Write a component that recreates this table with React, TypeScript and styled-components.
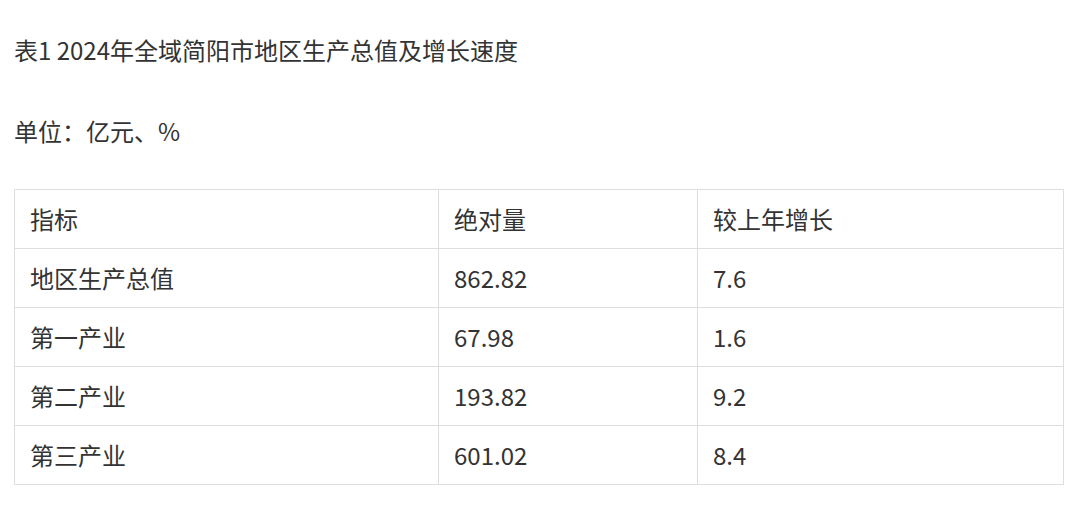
import React from 'react';
import styled, { createGlobalStyle } from 'styled-components';

const GlobalStyle = createGlobalStyle`
  html, body {
    margin: 0;
    padding: 0;
    background: #ffffff;
  }
  body {
    font-family: "Noto Sans CJK SC", "Noto Sans", sans-serif;
    color: #333333;
  }
`;

const rows = [
  { name: '地区生产总值', value: '862.82', growth: '7.6' },
  { name: '第一产业', value: '67.98', growth: '1.6' },
  { name: '第二产业', value: '193.82', growth: '9.2' },
  { name: '第三产业', value: '601.02', growth: '8.4' },
];

export default function App() {
  return (
    <Page>
      <GlobalStyle />
      <Caption>表1 2024年全域简阳市地区生产总值及增长速度</Caption>
      <Unit>单位：亿元、%</Unit>
      <Table>
        <colgroup>
          <Col $w={424} />
          <Col $w={259} />
          <Col $w={366} />
        </colgroup>
        <tbody>
          <tr>
            <Cell>指标</Cell>
            <Cell>绝对量</Cell>
            <Cell>较上年增长</Cell>
          </tr>
          {rows.map((r) => (
            <tr key={r.name}>
              <Cell>{r.name}</Cell>
              <Cell>{r.value}</Cell>
              <Cell>{r.growth}</Cell>
            </tr>
          ))}
        </tbody>
      </Table>
    </Page>
  );
}

const Page = styled.div`
  padding: 32px 14px 0 14px;
  font-size: 24px;
`;

const Caption = styled.p`
  margin: 0;
  line-height: 36px;
`;

const Unit = styled.p`
  margin: 45px 0 0 0;
  line-height: 36px;
`;

const Table = styled.table`
  margin-top: 40px;
  width: 1050px;
  border-collapse: collapse;
  table-layout: fixed;
`;

const Col = styled.col<{ $w: number }>`
  width: ${(p) => p.$w}px;
`;

const Cell = styled.td`
  border: 1px solid #dedede;
  padding: 12px 15px;
  line-height: 34px;
  font-size: 24px;
  color: #333333;
  text-align: left;
  vertical-align: middle;
`;
